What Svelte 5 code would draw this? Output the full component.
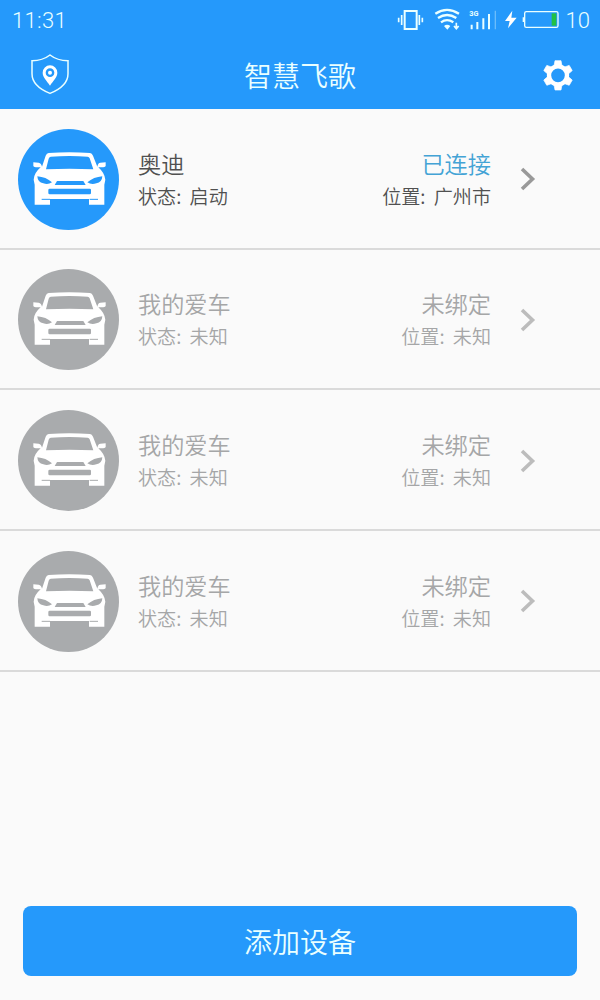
<script>
  let devices = [
    { name: '奥迪', bind: '已连接', state: '启动', place: '广州市', active: true },
    { name: '我的爱车', bind: '未绑定', state: '未知', place: '未知', active: false },
    { name: '我的爱车', bind: '未绑定', state: '未知', place: '未知', active: false },
    { name: '我的爱车', bind: '未绑定', state: '未知', place: '未知', active: false }
  ];
</script>

<div class="screen">

  <!-- STATUS BAR -->
  <div class="status-bar">
    <span class="clock">11:31</span>

    <svg width="175" height="40" viewBox="0 0 525 120" fill="none" stroke="#eaffff">
      <!-- vibrate -->
      <rect x="44" y="33" width="36" height="54" stroke-width="6" />
      <path d="M35 45v30M26 53v14M88 45v30M97 53v14" stroke-width="5" />
      <!-- wifi -->
      <path d="M136 41q35-23 71 0M144 54q27-18 55 0M153 67q18-13 37 0" stroke-width="7" />
      <path d="M162 78q9-7 19 0l-9 11z" fill="#eaffff" stroke="none" />
      <path d="M199 68v16M192 78l7 8 7-8" stroke-width="5" />
      <!-- signal -->
      <text class="network" x="238" y="49">3G</text>
      <path d="M245 74v14M262 66v22M280 55v33M297 42v46" stroke-width="6" />
      <path d="M316 32v56" stroke-width="4" opacity="0.35" />
      <!-- battery -->
      <path d="M367 32l-22 31h14l-5 22 26-32h-16z" fill="#fff" stroke="none" />
      <rect x="404" y="35" width="100" height="47" rx="5" stroke-width="4" />
      <path d="M400 52v14" stroke-width="4" />
      <rect x="485" y="40" width="14" height="37" fill="#22c044" stroke="none" />
    </svg>

    <span class="percent">10</span>
  </div>

  <!-- HEADER -->
  <header class="header">
    <svg class="shield" width="40" height="42" viewBox="0 0 120 126">
      <path
        d="M60 6q22 17 54 17v39c0 29-22 46-54 59C28 108 6 91 6 62V23q32 0 54-17z"
        fill="none" stroke="#eaffff" stroke-width="4.5"
      />
      <path
        d="M60 37a22 22 0 0 0-22 22c0 14 12 23 22 39 10-16 22-25 22-39a22 22 0 0 0-22-22zm0 9a13 13 0 1 1 0 26 13 13 0 0 1 0-26z"
        fill="#fff" fill-rule="evenodd"
      />
      <circle cx="60" cy="59" r="6" fill="#fff" />
    </svg>

    <h1>智慧飞歌</h1>

    <svg width="40" height="36" viewBox="0 0 120 108" fill="none" stroke="#fff">
      <circle cx="60" cy="55" r="27" stroke-width="13" />
      {#each [0, 60, 120, 180, 240, 300] as angle}
        <path d="M48 27l3-16h18l3 16z" fill="#fff" stroke-width="2" stroke-linejoin="round" transform="rotate({angle} 60 55)" />
      {/each}
    </svg>
  </header>

  <!-- DEVICES -->
  <ul class="devices">
    {#each devices as d}
      <li class="device" class:active={d.active}>
        <svg class="avatar" width="101" height="101" viewBox="24 25 303 303">
          <circle cx="175.500" cy="176.500" r="151.500" fill="currentColor" />
          <path
            d="M116 97q62-5 124 0 6 1 9 8l13 33q2-12 9-12l16-1v11q-1 4-13 4h-9q19 17 21 37l-3 15v60h-46v-17H120v17H74v-60l-3-15q1-20 21-37h-9q-12 0-13-4v-11l16 1q8 1 10 12l11-33q3-7 9-8z"
            fill="#fff"
          />
          <path d="M122 108q57-4 111 0 4 0 6 5l11 33q-72-4-142 0l8-32q1-5 6-6z" fill="currentColor" />
          <path d="M82 167q26 2 44 18-12 8-26 3-17-3-18-21zM277 167q-26 2-45 18 12 8 27 3 17-3 18-21z" fill="currentColor" />
          <path d="M141 181h79l7 12h-93z" fill="currentColor" />
          <rect x="115" y="204" width="128" height="17" rx="4" fill="currentColor" />
          <path d="M95 236h25M239 236h25" stroke="currentColor" stroke-width="3" />
        </svg>

        <div class="info">
          <span class="name">{d.name}</span>
          <span class="detail">状态: {d.state}</span>
        </div>

        <div class="info right">
          <span class="name bind">{d.bind}</span>
          <span class="detail">位置: {d.place}</span>
        </div>

        <svg class="arrow" width="16" height="26" viewBox="0 0 16 26">
          <path d="M2 3l10.500 10L2 23" fill="none" stroke="currentColor" stroke-width="3.600" />
        </svg>
      </li>
    {/each}
  </ul>

  <button class="add">添加设备</button>

</div>

<style>
  :global(body) {
    margin: 0;
    background: #fafafa;
  }

  .screen {
    display: flex;
    flex-direction: column;
    box-sizing: border-box;
    height: 1000px;
    padding-bottom: 24px;
    background: #fafafa;
    font-family: "Noto Sans CJK SC", sans-serif;
    font-weight: 350;
  }

  .status-bar {
    display: flex;
    align-items: center;
    height: 40px;
    padding: 0 10px 0 12px;
    background: #2599fb;
    color: #eaffff;
    font-family: Roboto, sans-serif;
    font-size: 22px;
    font-weight: 300;
  }

  .clock {
    flex: 1;
    letter-spacing: 0.3px;
  }

  .network {
    font: 700 22px Roboto, sans-serif;
    fill: #eaffff;
    stroke: none;
  }

  .percent {
    width: 25px;
    text-align: right;
  }

  .header {
    display: flex;
    align-items: center;
    justify-content: space-between;
    box-sizing: border-box;
    height: 69px;
    padding: 0 22px 0 30px;
    background: #2599fb;
    color: #eaffff;
  }

  .header svg {
    flex: none;
  }

  .shield {
    margin-bottom: 2px;
  }

  h1 {
    flex: 1;
    margin: 0;
    padding-right: 8px;
    font-size: 28px;
    font-weight: 350;
    text-align: center;
  }

  .devices {
    flex: 1;
    margin: 0;
    padding: 0;
    list-style: none;
  }

  .device {
    display: flex;
    align-items: center;
    box-sizing: border-box;
    height: 140.67px;
    padding: 2px 64px 0 18px;
    border-bottom: 2px solid #dadada;
    color: #a5a6a7;
  }

  .avatar {
    color: #a9abad;
  }

  .info {
    display: flex;
    flex-direction: column;
    margin-left: 19px;
  }

  .right {
    flex: 1;
    align-items: flex-end;
  }

  .name {
    font-size: 23.200px;
    line-height: 33px;
  }

  .detail {
    font-size: 19.100px;
    line-height: 32px;
    word-spacing: 4px;
  }

  .arrow {
    margin-left: 29px;
    color: #bcbcbc;
  }

  .active {
    color: #505050;
  }

  .active .avatar {
    color: #2599fb;
  }

  .active .bind {
    color: #43a3d5;
  }

  .active .arrow {
    color: #999;
  }

  .add {
    height: 70px;
    margin: 0 23px;
    border: none;
    border-radius: 8px;
    background: #2599fb;
    color: #eaffff;
    font: inherit;
    font-size: 28px;
  }
</style>
